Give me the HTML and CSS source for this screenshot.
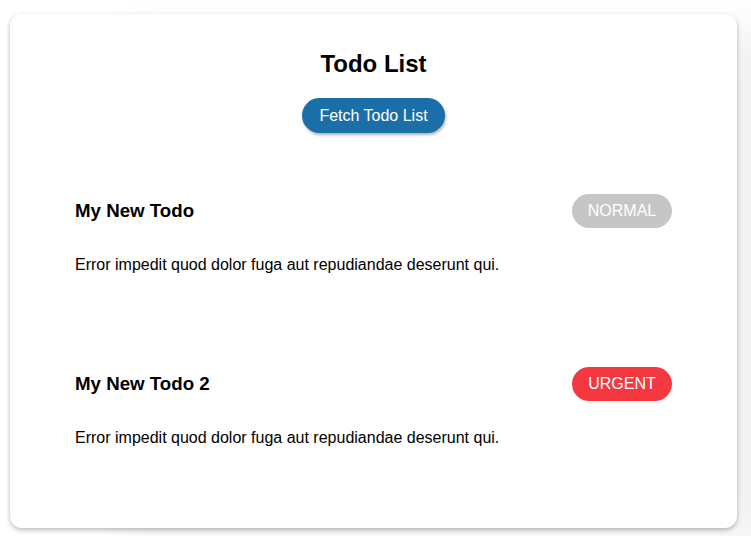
FILE: index.html
```html
<!DOCTYPE html>
<html>
<head>
<meta charset="utf-8">
<link rel="stylesheet" href="styles.css">
</head>
<body>
<div class="card">
  <h1 class="title">Todo List</h1>
  <button class="fetch">Fetch Todo List</button>
  <ul class="todos">
    <li class="todo">
      <div class="todo-head">
        <span class="todo-name">My New Todo</span>
        <span class="badge normal">NORMAL</span>
      </div>
      <p class="todo-desc">Error impedit quod dolor fuga aut repudiandae deserunt qui.</p>
    </li>
    <li class="todo">
      <div class="todo-head">
        <span class="todo-name">My New Todo 2</span>
        <span class="badge urgent">URGENT</span>
      </div>
      <p class="todo-desc">Error impedit quod dolor fuga aut repudiandae deserunt qui.</p>
    </li>
  </ul>
</div>
</body>
</html>
```
FILE: styles.css
```css
html, body {
  margin: 0;
  padding: 0;
  background: #ffffff;
}
body {
  padding: 14px 14px 9px 10px;
  font-family: "Liberation Sans", Arial, sans-serif;
  color: #000;
}
.card {
  background: #fff;
  border-radius: 12px;
  box-shadow: 0 2px 5px rgba(0,0,0,0.28), 110px 14px 40px rgba(0,0,0,0.05);
  padding: 36px 65px 81px;
  display: flex;
  flex-direction: column;
  align-items: center;
}
.title {
  margin: 0;
  font-size: 24px;
  line-height: 28px;
  font-weight: bold;
}
.fetch {
  margin-top: 20px;
  width: 143px;
  height: 35px;
  border: none;
  border-radius: 18px;
  background: #1a6fa8;
  color: #fff;
  font-family: "Liberation Sans", Arial, sans-serif;
  font-size: 16px;
  box-shadow: 1px 2px 3px rgba(0,0,0,0.3);
  padding: 0;
}
.todos {
  list-style: none;
  margin: 61px 0 0;
  padding: 0;
  align-self: stretch;
  display: flex;
  flex-direction: column;
  gap: 93px;
}
.todo-head {
  display: flex;
  justify-content: space-between;
  align-items: center;
  height: 34px;
}
.todo-name {
  font-size: 18.72px;
  font-weight: bold;
}
.badge {
  width: 100px;
  height: 34px;
  border-radius: 17px;
  color: #fff;
  font-size: 16px;
  display: flex;
  align-items: center;
  justify-content: center;
}
.normal { background: #c6c6c6; }
.urgent { background: #f5383f; }
.todo-desc {
  margin: 28px 0 0;
  font-size: 16px;
  line-height: 18px;
}
```
